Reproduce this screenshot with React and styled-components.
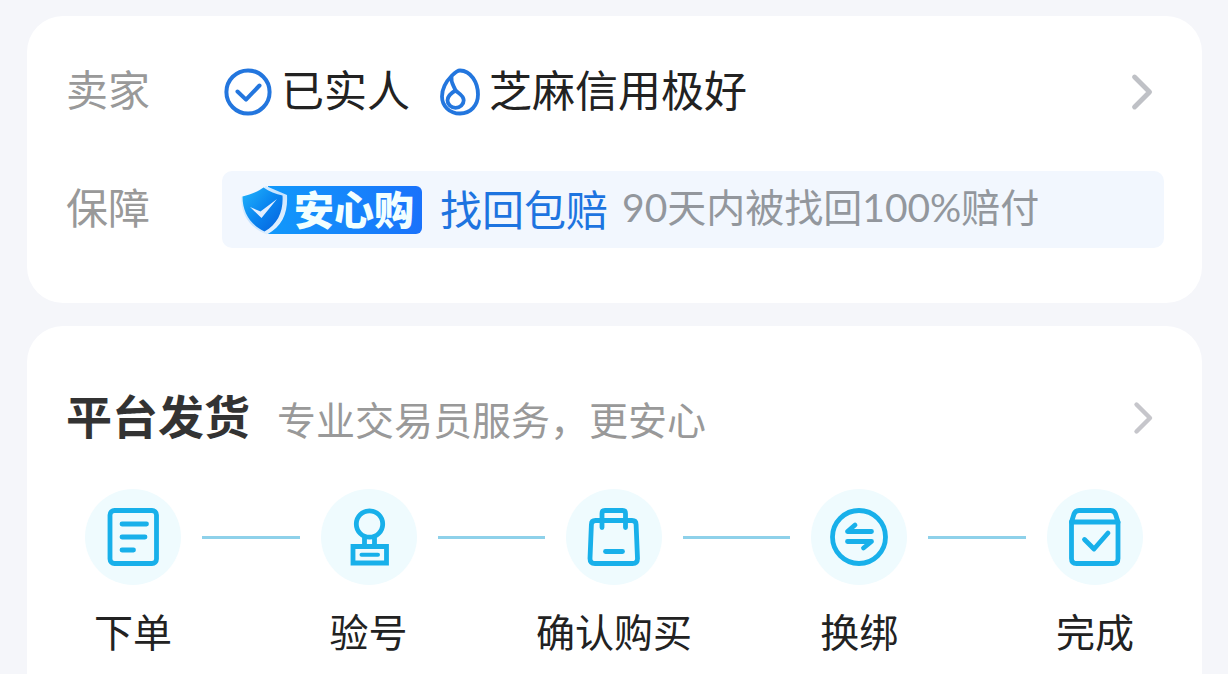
import React from 'react'
import { styled, createGlobalStyle } from 'styled-components'

const Chevron = ({ size, color }) => (
    <svg width={size} height={size} viewBox="0 0 36 36" fill="none" stroke={color} strokeWidth="4.4" strokeLinecap="round" strokeLinejoin="round">
        <path d="M18.5 4.5L32 18L18.5 31.5" />
    </svg>
)

const VerifiedIcon = () => (
    <svg width="48" height="48" viewBox="0 0 48 48" fill="none" stroke="#2376de" strokeWidth="4" strokeLinecap="round" strokeLinejoin="round">
        <circle cx="24" cy="24" r="21.6" />
        <path d="M13.5 23.5L22 31.6L35.5 17.5" />
    </svg>
)

const SesameIcon = () => (
    <svg width="40" height="48" viewBox="0 0 40 48" fill="none" stroke="#2376de" strokeWidth="3.8" strokeLinecap="round" strokeLinejoin="round">
        <path d="M20 2.5C31 2.5 38 15 38 26.5C38 37.5 30.5 45.5 20 45.5C9.5 45.5 2 38 2 28.5C2 20 6.5 13 12 7.5C14.500 5 17 2.500 20 2.500Z" />
        <path d="M11.500 8.500C10.500 14.500 13.500 17 15.500 22.500" />
        <path d="M15.500 22.500C12 24.500 7.500 27.500 7.500 32.300C7.500 36.700 11.200 39.800 15.600 39.800C20 39.800 23.700 36.700 23.700 32.300C23.700 27.500 19 25.500 15.500 22.500Z" />
    </svg>
)

const ShieldIcon = () => (
    <svg width="48" height="50" viewBox="0 0 48 50" fill="none">
        <defs>
            <linearGradient id="shield" x1="0" y1="0" x2="1" y2="1">
                <stop offset="0" stopColor="#22b5fb" />
                <stop offset="0.5" stopColor="#0a86f0" />
                <stop offset="1" stopColor="#0560dc" />
            </linearGradient>
            <linearGradient id="rim" x1="0" y1="0" x2="1" y2="1">
                <stop offset="0" stopColor="#e6f6ff" />
                <stop offset="0.5" stopColor="#c4e2ff" />
                <stop offset="1" stopColor="#f4faff" />
            </linearGradient>
        </defs>
        <path d="M26 1L47 10C48 27 43 41 27 49.5C10 43 1 30 1 12C9 10 18 6 26 1Z" fill="url(#rim)" />
        <path d="M23.5 2.5C29 6.5 36 9 42.5 10.5C43.5 26 38 39 24.5 46.5C10 39.5 2.5 27 2.5 11.5C10.5 9.5 17.5 7 23.5 2.5Z" fill="url(#shield)" />
        <path d="M10 22L20.5 26.5L37 14L21.5 33Z" fill="#e4efff" />
    </svg>
)

const StepSvg = ({ children }) => (
    <svg width="60" height="60" viewBox="0 0 60 60" fill="none" stroke="#18b0ea" strokeWidth="4.8" strokeLinecap="round" strokeLinejoin="round">
        {children}
    </svg>
)

const steps = [
    {
        name: '下单',
        icon: (
            <StepSvg>
                <rect x="7" y="3.5" width="46.5" height="53" rx="4.5" />
                <path d="M19 17H43.5M19 30H42M19 43H30.5" />
            </StepSvg>
        ),
    },
    {
        name: '验号',
        icon: (
            <StepSvg>
                <circle cx="30.5" cy="17" r="13.2" />
                <path d="M25.5 31V39M35.5 31V39" />
                <path d="M14 39.5H47.5V56H14Z" strokeLinejoin="miter" />
                <path d="M22.5 47.7H39" strokeWidth="4" />
            </StepSvg>
        ),
    },
    {
        name: '确认购买',
        icon: (
            <StepSvg>
                <path d="M18 13.5H11.5Q7.5 13.5 7.4 17.5L6 51.5Q6 56.5 11 56.5H48.5Q53.5 56.5 53.5 51.5L52.1 17.5Q52 13.5 48 13.5H41.5" />
                <path d="M18 20.5V6.5Q18 3.5 21 3.5H38.5Q41.5 3.5 41.5 6.5V20.5M18 13.5H41.5" />
                <path d="M21.5 44.5H38.5" />
            </StepSvg>
        ),
    },
    {
        name: '换绑',
        icon: (
            <StepSvg>
                <circle cx="30" cy="30" r="26.5" />
                <path d="M42.5 24.5H18.5L26 18M18.5 34.5H42.5L34.5 41" />
            </StepSvg>
        ),
    },
    {
        name: '完成',
        icon: (
            <StepSvg>
                <path d="M6.5 15V51.5Q6.5 56.5 11.5 56.5H48Q53 56.5 53 51.5V15" />
                <path d="M6.5 15L9 7Q10.5 3.5 14 3.5H45.5Q49 3.5 50.5 7L53 15Z" />
                <path d="M19.5 32.5L29 42L43 26" />
            </StepSvg>
        ),
    },
]

const App = () => {
    return (
        <Page>
            <GlobalStyle />

            <Card>
                <Row>
                    <Label>卖家</Label>
                    <Tags>
                        <Tag><VerifiedIcon /><TagText>已实人</TagText></Tag>
                        <Tag><SesameIcon /><TagText>芝麻信用极好</TagText></Tag>
                    </Tags>
                    <MoreButton aria-label="卖家"><Chevron size={40} color="#bfc1c6" /></MoreButton>
                </Row>

                <Row>
                    <Label>保障</Label>
                    <Guarantee>
                        <Badge>
                            <ShieldIcon />
                            <BadgeText>安心购</BadgeText>
                        </Badge>
                        <Promise>找回包赔</Promise>
                        <Hint>90天内被找回100%赔付</Hint>
                    </Guarantee>
                </Row>
            </Card>

            <Card $last>
                <Header>
                    <Title>平台发货</Title>
                    <Subtitle>专业交易员服务，更安心</Subtitle>
                    <MoreButton aria-label="平台发货"><Chevron size={36} color="#c6c6cb" /></MoreButton>
                </Header>

                <Steps>
                    {steps.map((step, i) => (
                        <React.Fragment key={step.name}>
                            {i > 0 && <Line $grow={i === 2 || i === 3 ? 11 : 10} />}
                            <Step>
                                <Circle>{step.icon}</Circle>
                                <StepName>{step.name}</StepName>
                            </Step>
                        </React.Fragment>
                    ))}
                </Steps>
            </Card>
        </Page>
    )
}

export default App

const GlobalStyle = createGlobalStyle`

* {
    box-sizing: border-box;
}

body {
    margin: 0;
    background: #f5f6fa;
    font-family: "Noto Sans CJK SC", sans-serif;
    color: #222;
}

svg {
    display: block;
    flex-shrink: 0;
}

`

const Page = styled.main`

display: flex;
flex-direction: column;
gap: 23px;
padding: 16px 26px 0 27px;
height: 100vh;
overflow: hidden;

`

const Card = styled.section`

display: flex;
flex-direction: column;
flex-shrink: 0;
gap: 49px;
padding: ${p => (p.$last ? '62px 38px 24px 39px' : '46px 38px 55px 39px')};
border-radius: ${p => (p.$last ? '36px 36px 0 0' : '36px')};
background: #fff;

`

const Row = styled.div`

display: flex;
align-items: center;
min-height: 60px;
line-height: 52px;

`

const Label = styled.div`

width: 156px;
flex-shrink: 0;
padding-bottom: 8px;
font-size: 42px;
color: #999;

`

const Tags = styled.div`

display: flex;
gap: 30px;
padding-left: 2px;

`

const Tag = styled.div`

display: flex;
align-items: center;
gap: 9px;
font-size: 43px;
white-space: nowrap;

`

const TagText = styled.span`

padding-bottom: 8px;

`

const MoreButton = styled.button`

margin-left: auto;
padding: 0;
margin-right: 10px;
border: 0;
background: none;
cursor: pointer;

`

const Guarantee = styled.div`

display: flex;
align-items: center;
flex: 1;
height: 77px;
padding-left: 18px;
border-radius: 10px;
background: #f2f7fe;
white-space: nowrap;

`

const Badge = styled.div`

display: flex;
align-items: center;
height: 48px;
padding-right: 8px;
margin-right: 18px;
border-radius: 6px;
background: linear-gradient(90deg, transparent 28px, #1199fb 28px, #1a72fb 100%);

`

const BadgeText = styled.span`

margin-left: 6px;
padding-bottom: 4px;
font-size: 40px;
font-weight: 900;
line-height: 48px;
color: #f2ffff;

`

const Promise = styled.span`

padding-bottom: 4px;
margin-right: 14px;
font-size: 42px;
color: #1d74e0;

`

const Hint = styled.span`

padding-bottom: 6px;
font-family: Lato, "Noto Sans CJK SC", sans-serif;
font-size: 39px;
color: #93979d;

`

const Header = styled.div`

display: flex;
align-items: center;
line-height: 60px;

`

const Title = styled.h2`

margin: 0 27px 0 0;
padding-bottom: 8px;
font-size: 46px;
font-weight: 700;
line-height: 52px;
color: #333;

`

const Subtitle = styled.span`

font-size: 39px;
color: #999;

`

const Steps = styled.div`

display: flex;
padding: 0 21px 0 19px;
margin-top: -8px;

`

const Step = styled.div`

display: flex;
flex-direction: column;
align-items: center;
width: 96px;
flex-shrink: 0;

`

const Circle = styled.div`

display: flex;
align-items: center;
justify-content: center;
width: 96px;
height: 96px;
border-radius: 50%;
background: #effbfe;

`

const StepName = styled.div`

margin-top: 15px;
font-size: 39px;
line-height: 60px;
white-space: nowrap;

`

const Line = styled.div`

flex: ${p => p.$grow};
height: 3px;
margin: 47px 21px 0;
background: #8ed1ea;

`
